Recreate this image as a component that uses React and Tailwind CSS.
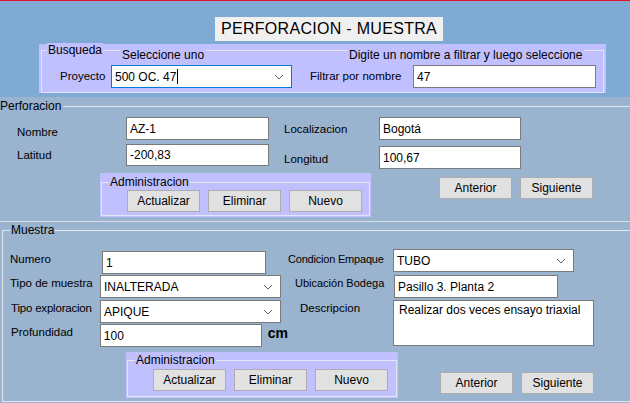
import React from "react";

function Chevron() {
  return (
    <svg width="10" height="6" viewBox="0 0 10 6" className="shrink-0">
      <path d="M1 1 L5 5 L9 1" fill="none" stroke="#606060" strokeWidth="1" />
    </svg>
  );
}

function Box({ w, h = "h-[23px]", children, className = "" }) {
  return (
    <div className={`${w} ${h} border border-[#7a7a7a] bg-white flex items-center pl-[3px] text-[12px] leading-[14px] whitespace-nowrap ${className}`}>
      {children}
    </div>
  );
}

function Select({ w, children, className = "", focus = false }) {
  return (
    <div className={`${w} h-[23px] border ${focus ? "border-[#0078d7]" : "border-[#7a7a7a]"} bg-white flex items-center pl-[3px] pr-[7px] text-[12px] leading-[14px] whitespace-nowrap ${className}`}>
      <div className="flex-1 flex items-center">{children}</div>
      <Chevron />
    </div>
  );
}

function Btn({ children, className = "" }) {
  return (
    <div className={`w-[73px] h-[22px] bg-[#e1e1e1] border border-[#adadad] flex items-center justify-center text-[12px] ${className}`}>
      {children}
    </div>
  );
}

function AdminPanel({ outer, inner, btnRow }) {
  return (
    <div className={`bg-[#c0c0ff] ${outer}`}>
      <div className={`relative border border-[#e4e4f4] ${inner}`}>
        <span className="absolute left-[7px] top-[-8px] bg-[#c0c0ff] px-[1px] text-[12px] leading-[14px]">Administracion</span>
        <div className={`flex gap-[8px] ${btnRow}`}>
          <Btn>Actualizar</Btn>
          <Btn>Eliminar</Btn>
          <Btn>Nuevo</Btn>
        </div>
      </div>
    </div>
  );
}

export default function App() {
  return (
    <div className="w-[630px] h-[403px] overflow-hidden bg-[#9ab3cf] text-black font-['Liberation_Sans',sans-serif] text-[11.5px]">
      <div className="h-px bg-[#e81123]" />
      {/* top area */}
      <div className="bg-[#7eaad3] h-[96px] pt-[16px]">
        <div className="ml-[215px] w-[228px] h-[24px] bg-[#f0f0f0] flex items-center justify-center text-[16px] tracking-[0.3px]">
          PERFORACION - MUESTRA
        </div>
        <div className="ml-[39px] mt-[3px] w-[567px] h-[49px] bg-[#c0c0ff] pt-[6px] px-[2px]">
          <div className="relative h-[43px] border border-[#e4e4f4]">
            <span className="absolute left-[5px] top-[-8px] bg-[#c0c0ff] px-[1px] text-[12px] leading-[14px]">Busqueda</span>
            <span className="absolute left-[78px] top-[-3px] bg-[#c0c0ff] px-[2px] text-[12px] leading-[14px]">Seleccione uno</span>
            <span className="absolute left-[305px] top-[-3px] bg-[#c0c0ff] px-[2px] text-[12px] leading-[14px]">Digite un nombre a filtrar y luego seleccione</span>
            <div className="flex items-center pt-[14px]">
              <span className="ml-[18px] w-[51px]">Proyecto</span>
              <Select w="w-[181px]" focus>
                <span>500 OC. 47</span>
                <span className="inline-block w-px h-[15px] bg-black ml-[1px]" />
              </Select>
              <span className="ml-[18px] w-[103px]">Filtrar por nombre</span>
              <Box w="w-[183px]">47</Box>
            </div>
          </div>
        </div>
      </div>

      {/* Perforacion */}
      <div className="relative mt-[9px] h-[116px] border-t border-b border-t-[#dfe6ef] border-b-[#d8dce2]">
        <span className="absolute left-0 top-[-8px] bg-[#9ab3cf] pr-[2px] text-[12px] leading-[14px]">Perforacion</span>
        <div className="flex pt-[10px]">
          <div className="ml-[17px] w-[267px] flex flex-col">
            <div className="flex items-start h-[23px]">
              <span className="w-[109px] pt-[8px] leading-[14px]">Nombre</span>
              <Box w="w-[143px]">AZ-1</Box>
            </div>
            <div className="flex items-center h-[22px] mt-[4px]">
              <span className="w-[109px] leading-[14px]">Latitud</span>
              <Box w="w-[143px]" h="h-[22px]">-200,83</Box>
            </div>
          </div>
          <div className="flex flex-col">
            <div className="flex items-center h-[23px]">
              <span className="w-[95px] leading-[14px]">Localizacion</span>
              <Box w="w-[142px]">Bogotá</Box>
            </div>
            <div className="flex items-center h-[23px] mt-[6px]">
              <span className="w-[95px] pt-[2px] leading-[14px]">Longitud</span>
              <Box w="w-[142px]">100,67</Box>
            </div>
          </div>
        </div>
        <div className="flex items-start mt-[4px]">
          <AdminPanel outer="ml-[100px] w-[271px] h-[44px] pt-[9px] px-[1px] pb-[1px]" inner="h-[34px]" btnRow="pt-[7px] ml-[25px]" />
          <Btn className="ml-[68px] mt-[4px] h-[21px]">Anterior</Btn>
          <Btn className="ml-[8px] mt-[4px] h-[21px]">Siguiente</Btn>
        </div>
      </div>

      {/* Muestra */}
      <div className="relative ml-[2px] mt-[8px] w-[640px] h-[172px] border-l border-t border-b border-l-[#dfe6ef] border-t-[#e2e9f5] border-b-[#dfe6ef]">
        <span className="absolute left-[7px] top-[-8px] bg-[#9ab3cf] px-[1px] text-[12px] leading-[14px]">Muestra</span>
        <div className="flex">
          <div className="ml-[7px] w-[278px] flex flex-col">
            <div className="flex items-start mt-[20px]">
              <span className="w-[90px] pt-[1px] leading-[14px]">Numero</span>
              <Box w="w-[164px]" className="ml-[2px]">1</Box>
            </div>
            <div className="flex items-start mt-[1px]">
              <span className="w-[90px] pt-[1px] leading-[14px] whitespace-nowrap">Tipo de muestra</span>
              <Select w="w-[181px]">INALTERADA</Select>
            </div>
            <div className="flex items-start mt-[2px]">
              <span className="w-[90px] pt-[1px] pl-[1px] leading-[14px] whitespace-nowrap tracking-[-0.2px]">Tipo exploracion</span>
              <Select w="w-[181px]">APIQUE</Select>
            </div>
            <div className="flex items-start mt-[1px]">
              <span className="w-[91px] pt-[1px] pl-[1px] leading-[14px]">Profundidad</span>
              <Box w="w-[164px]">100</Box>
              <span className="ml-[6px] text-[14px] font-bold leading-[18px]">cm</span>
            </div>
          </div>
          <div className="flex flex-col">
            <div className="flex items-start mt-[18px]">
              <span className="w-[105px] pt-[3px] leading-[14px] whitespace-nowrap text-[11px] tracking-[-0.2px]">Condicion Empaque</span>
              <Select w="w-[181px]">TUBO</Select>
            </div>
            <div className="flex items-start mt-[3px]">
              <span className="w-[106px] pt-[1px] pl-[7px] leading-[14px] whitespace-nowrap text-[11px]">Ubicación Bodega</span>
              <Box w="w-[164px]">Pasillo 3. Planta 2</Box>
            </div>
            <div className="flex items-start mt-[2px]">
              <span className="w-[105px] pt-[1px] pl-[12px] leading-[14px]">Descripcion</span>
              <div className="w-[201px] h-[46px] border border-[#7a7a7a] bg-white pl-[5px] pt-[2px] text-[12px] leading-[14px]">
                Realizar dos veces ensayo triaxial
              </div>
            </div>
          </div>
        </div>
        <div className="flex items-start mt-[5px]">
          <AdminPanel outer="ml-[123px] w-[272px] h-[46px] pt-[8px] px-[1px] pb-[1px]" inner="h-[37px]" btnRow="pt-[8px] ml-[25px]" />
          <Btn className="ml-[42px] mt-[20px] h-[21px]">Anterior</Btn>
          <Btn className="ml-[8px] mt-[20px] h-[21px]">Siguiente</Btn>
        </div>
      </div>
    </div>
  );
}
